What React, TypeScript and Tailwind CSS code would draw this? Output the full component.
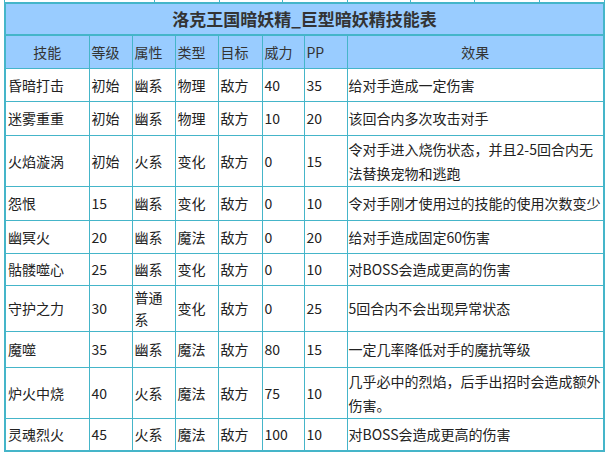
const rows: { name: string; lv: string; attr: string; kind: string; target: string; power: string; pp: string; effect: string; h: string }[] = [
  { name: '昏暗打击', lv: '初始', attr: '幽系', kind: '物理', target: '敌方', power: '40', pp: '35', effect: '给对手造成一定伤害', h: 'h-[33px]' },
  { name: '迷雾重重', lv: '初始', attr: '幽系', kind: '物理', target: '敌方', power: '10', pp: '20', effect: '该回合内多次攻击对手', h: 'h-[34px]' },
  { name: '火焰漩涡', lv: '初始', attr: '火系', kind: '变化', target: '敌方', power: '0', pp: '15', effect: '令对手进入烧伤状态，并且2-5回合内无法替换宠物和逃跑', h: 'h-[51px]' },
  { name: '怨恨', lv: '15', attr: '幽系', kind: '变化', target: '敌方', power: '0', pp: '10', effect: '令对手刚才使用过的技能的使用次数变少', h: 'h-[34px]' },
  { name: '幽冥火', lv: '20', attr: '幽系', kind: '魔法', target: '敌方', power: '0', pp: '20', effect: '给对手造成固定60伤害', h: 'h-[33px]' },
  { name: '骷髅噬心', lv: '25', attr: '幽系', kind: '变化', target: '敌方', power: '0', pp: '10', effect: '对BOSS会造成更高的伤害', h: 'h-[32px]' },
  { name: '守护之力', lv: '30', attr: '普通系', kind: '变化', target: '敌方', power: '0', pp: '25', effect: '5回合内不会出现异常状态', h: 'h-[46px]' },
  { name: '魔噬', lv: '35', attr: '幽系', kind: '魔法', target: '敌方', power: '80', pp: '15', effect: '一定几率降低对手的魔抗等级', h: 'h-[36px]' },
  { name: '炉火中烧', lv: '40', attr: '火系', kind: '魔法', target: '敌方', power: '75', pp: '10', effect: '几乎必中的烈焰，后手出招时会造成额外伤害。', h: 'h-[51px]' },
  { name: '灵魂烈火', lv: '45', attr: '火系', kind: '魔法', target: '敌方', power: '100', pp: '10', effect: '对BOSS会造成更高的伤害', h: 'h-[33px]' },
];

const headers = ['技能', '等级', '属性', '类型', '目标', '威力', 'PP', '效果'];

export default function App() {
  return (
    <div className="w-[609px] h-[455px] bg-white overflow-hidden font-['Noto_Sans_CJK_SC',sans-serif] text-[14px] text-[#333]">
      <div className="ml-[4px] w-[601px] h-[2px] flex border-l border-[#45b5c9]">
        <div className="w-[150px] border-r border-[#45b5c9]" />
        <div className="w-[65px] border-r border-[#45b5c9]" />
        <div className="w-[63px] border-r border-[#45b5c9]" />
        <div className="w-[65px] border-r border-[#45b5c9]" />
        <div className="w-[63px] border-r border-[#45b5c9]" />
        <div className="w-[64px] border-r border-[#45b5c9]" />
        <div className="w-[65px] border-r border-[#45b5c9]" />
        <div className="flex-1 border-r border-[#45b5c9]" />
      </div>
      <table className="ml-[4px] w-[601px] table-fixed border-collapse border-2 border-[#45b5c9] leading-[24px]">
        <colgroup>
          <col className="w-[84px]" />
          <col className="w-[43px]" />
          <col className="w-[43px]" />
          <col className="w-[43px]" />
          <col className="w-[44px]" />
          <col className="w-[42px]" />
          <col className="w-[43px]" />
          <col />
        </colgroup>
        <thead>
          <tr className="h-[32px] bg-[#99ccff]">
            <th colSpan={8} className="border-b-2 border-[#45b5c9] text-[17px] font-bold text-[#333] text-center">
              洛克王国暗妖精_巨型暗妖精技能表
            </th>
          </tr>
          <tr className="h-[33px] bg-[#99ccff]">
            {headers.map((t, i) => (
              <th
                key={t}
                className={
                  i === 0 || i === 7
                    ? 'border border-[#45b5c9] font-normal text-center'
                    : 'border border-[#45b5c9] font-normal text-left pl-[2px]'
                }
              >
                {t}
              </th>
            ))}
          </tr>
        </thead>
        <tbody>
          {rows.map((r) => (
            <tr key={r.name} className={r.h}>
              {[r.name, r.lv, r.attr, r.kind, r.target, r.power, r.pp, r.effect].map((c, i) => (
                <td
                  key={i}
                  className={
                    i === 7
                      ? 'border border-[#45b5c9] pl-[1px] pr-0 align-middle text-[#222]'
                      : c.length > 2 && i === 2
                        ? 'border border-[#45b5c9] pl-[2px] pr-0 align-middle text-[#222] leading-[22px]'
                        : 'border border-[#45b5c9] pl-[2px] pr-0 align-middle text-[#222]'
                  }
                >
                  {c}
                </td>
              ))}
            </tr>
          ))}
        </tbody>
      </table>
    </div>
  );
}
